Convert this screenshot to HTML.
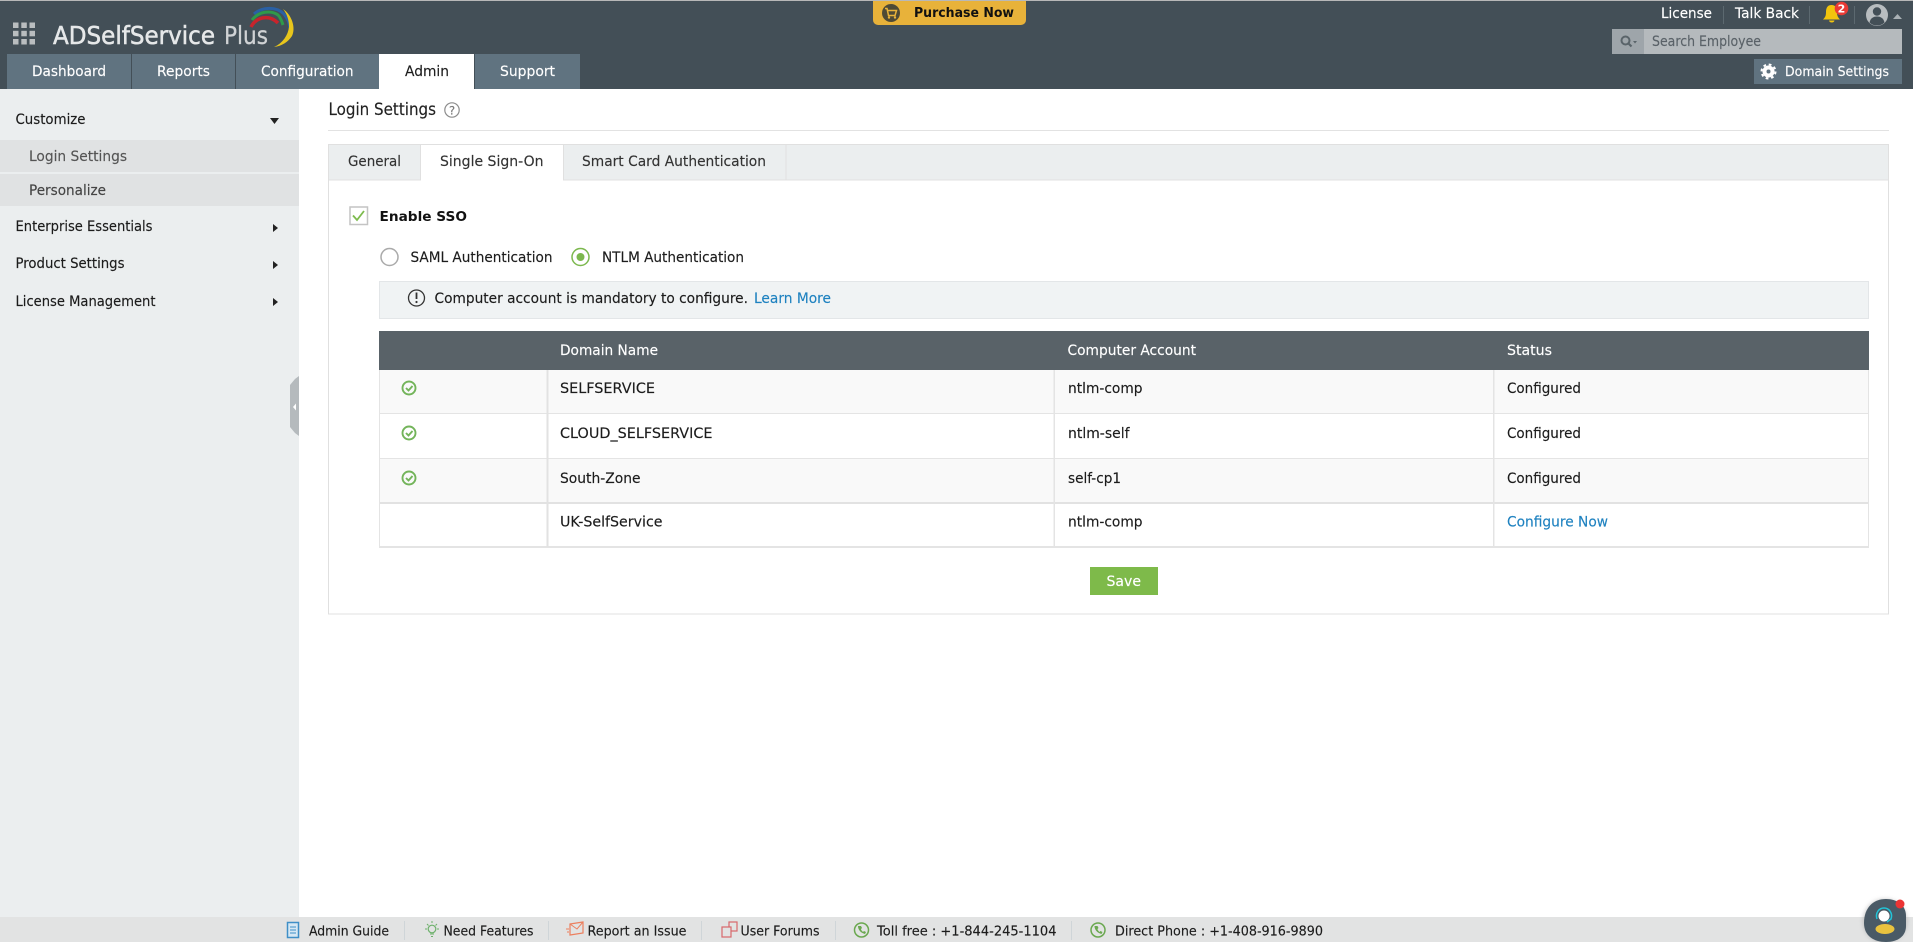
<!DOCTYPE html>
<html lang="en"><head><meta charset="utf-8"><title>ADSelfService Plus - Login Settings</title>
<style>
html,body{margin:0;padding:0;width:1913px;height:942px;overflow:hidden;background:#fff}
svg{display:block}
text{font-family:"DejaVu Sans","Liberation Sans",sans-serif;font-size:14px;color:#1c1c1c;fill:currentColor;stroke:currentColor;stroke-width:.14px}
.w{color:#fff}.g{color:#555}.l{color:#1f82c0}.t{font-size:14.5px;color:#333}.b{font-weight:bold;stroke-width:0}.f{font-size:13.5px}
</style></head><body>
<svg width="1913" height="942" viewBox="0 0 1913 942" xmlns="http://www.w3.org/2000/svg">
<defs><filter id="s" x="-30%" y="-30%" width="160%" height="160%"><feGaussianBlur stdDeviation="2"/></filter></defs>
<rect width="1913" height="942" fill="#fff"/>
<!-- header -->
<rect width="1913" height="89" fill="#434f57"/>
<rect width="1913" height="1" fill="#b8b8b8"/>
<g fill="#b9bdbf">
<rect x="13" y="22.500" width="5.500" height="5.500"/><rect x="21.300" y="22.500" width="5.500" height="5.500"/><rect x="29.500" y="22.500" width="5.500" height="5.500"/>
<rect x="13" y="30.800" width="5.500" height="5.500"/><rect x="21.300" y="30.800" width="5.500" height="5.500"/><rect x="29.500" y="30.800" width="5.500" height="5.500"/>
<rect x="13" y="39" width="5.500" height="5.500"/><rect x="21.300" y="39" width="5.500" height="5.500"/><rect x="29.500" y="39" width="5.500" height="5.500"/>
</g>
<text x="53" y="44" style="font-size:25px;color:#e6e8e9;stroke-width:.55px" textLength="162" lengthAdjust="spacingAndGlyphs">ADSelfService</text>
<text x="224" y="44" style="font-size:25px;color:#d0d3d5;stroke-width:.3px" textLength="44" lengthAdjust="spacingAndGlyphs">Plus</text>
<path d="M254 14C262 7 276 6 284 14C288 19 290 25 290 30" fill="none" stroke="#2a60a4" stroke-width="3"/>
<path d="M252 20C259 11 271 10 278 15C281 18 282 22 283 25" fill="none" stroke="#2f9a4a" stroke-width="3"/>
<path d="M251 27C256 17 269 14 278 23" fill="none" stroke="#c8242c" stroke-width="3.500"/>
<path d="M283 9C292 15 296 28 292 36C288 42 282 46 274 47C283 43 288 35 289 27C289 20 287 14 283 9Z" fill="#e8c61c"/>
<!-- purchase -->
<path d="M873 0H1026V20a5 5 0 0 1-5 5H878a5 5 0 0 1-5-5Z" fill="#e8b23a"/>
<rect x="873" y="0" width="153" height="1" fill="#b8b8b8"/>
<circle cx="891" cy="13" r="9" fill="#4f4a35"/>
<path d="M885 8.500h2l1.500 7h6.500l1.500-5h-8.500" fill="none" stroke="#e8b23a" stroke-width="1.500"/><circle cx="889" cy="17.500" r="1.200" fill="#e8b23a"/><circle cx="895" cy="17.500" r="1.200" fill="#e8b23a"/>
<text x="914" y="17" class="b" style="font-size:13px;color:#111" textLength="100" lengthAdjust="spacingAndGlyphs">Purchase Now</text>
<!-- top right -->
<text x="1661" y="18" class="w" textLength="51" lengthAdjust="spacingAndGlyphs">License</text>
<rect x="1723" y="6" width="1" height="18" fill="#5c6970"/>
<text x="1735" y="18" class="w" textLength="64" lengthAdjust="spacingAndGlyphs">Talk Back</text>
<rect x="1809" y="6" width="1" height="18" fill="#5c6970"/>
<path d="M1831.500 5c-4 0-5.500 3-5.500 7 0 4-1 5.500-3 7.500h17c-2-2-3-3.500-3-7.500 0-4-1.500-7-5.500-7Z" fill="#f2c40d"/><path d="M1829 20.500a2.800 2.500 0 0 0 5.500 0Z" fill="#f2c40d"/>
<circle cx="1841.500" cy="8.500" r="6.800" fill="#ea3a35"/><text x="1841.500" y="12.500" text-anchor="middle" class="b w" style="font-size:11px">2</text>
<rect x="1854" y="6" width="1" height="18" fill="#5c6970"/>
<circle cx="1877" cy="15" r="11" fill="#b8bdc0"/><circle cx="1877" cy="11.500" r="4.200" fill="#434f57"/><path d="M1869.500 22.500c1-4.500 4-6 7.500-6s6.500 1.500 7.500 6a11 11 0 0 1-15 0Z" fill="#434f57"/>
<path d="M1893 19l4.500-5 4.500 5Z" fill="#a9b0b4"/>
<rect x="1612" y="29" width="290" height="25" fill="#b5babd"/><rect x="1612" y="29" width="32" height="25" fill="#9ea5aa"/>
<circle cx="1625.500" cy="40.500" r="4" fill="none" stroke="#5a646a" stroke-width="2"/><path d="M1628.500 43.500l3 3" stroke="#5a646a" stroke-width="2.200"/><path d="M1633 41h4l-2 2.500Z" fill="#5a646a"/>
<text x="1652" y="46" style="color:#5a6268" textLength="109" lengthAdjust="spacingAndGlyphs">Search Employee</text>
<rect x="1754" y="59" width="148" height="25" fill="#607380"/>
<circle cx="1768.500" cy="71.500" r="4" fill="none" stroke="#fff" stroke-width="4"/>
<circle cx="1768.500" cy="71.500" r="7" fill="none" stroke="#fff" stroke-width="2" stroke-dasharray="2.750 2.750"/>
<text x="1785" y="76" class="w f" textLength="104" lengthAdjust="spacingAndGlyphs">Domain Settings</text>
<!-- nav -->
<rect x="7" y="54" width="124" height="35" fill="#607380"/><rect x="132" y="54" width="103" height="35" fill="#607380"/><rect x="236" y="54" width="143" height="35" fill="#607380"/><rect x="379" y="54" width="95" height="35" fill="#fff"/><rect x="475" y="54" width="105" height="35" fill="#607380"/>
<text x="32" y="76" class="w" textLength="74" lengthAdjust="spacingAndGlyphs">Dashboard</text>
<text x="157" y="76" class="w" textLength="53" lengthAdjust="spacingAndGlyphs">Reports</text>
<text x="261" y="76" class="w" textLength="92.500" lengthAdjust="spacingAndGlyphs">Configuration</text>
<text x="405" y="76" textLength="44" lengthAdjust="spacingAndGlyphs">Admin</text>
<text x="500" y="76" class="w" textLength="55" lengthAdjust="spacingAndGlyphs">Support</text>
<!-- sidebar -->
<rect x="0" y="89" width="299" height="828" fill="#ebeeef"/>
<rect x="0" y="140" width="299" height="32" fill="#e0e2e3"/><rect x="0" y="174" width="299" height="32" fill="#e0e2e3"/>
<text x="15.500" y="124" textLength="70" lengthAdjust="spacingAndGlyphs">Customize</text>
<path d="M270 118h9l-4.500 6Z" fill="#222"/>
<text x="29" y="161" class="g" textLength="98" lengthAdjust="spacingAndGlyphs">Login Settings</text>
<text x="29" y="195" style="color:#444" textLength="77" lengthAdjust="spacingAndGlyphs">Personalize</text>
<text x="15.500" y="231" textLength="137" lengthAdjust="spacingAndGlyphs">Enterprise Essentials</text>
<text x="15.500" y="268" textLength="109" lengthAdjust="spacingAndGlyphs">Product Settings</text>
<text x="15.500" y="306" textLength="140" lengthAdjust="spacingAndGlyphs">License Management</text>
<path d="M273 224v8l5-4Z M273 261v8l5-4Z M273 298v8l5-4Z" fill="#222"/>
<path d="M299 376v60l-4-3-5-6v-42l5-6Z" fill="#b5babd"/><path d="M296 403.500v7l-3-3.500Z" fill="#fff"/>
<!-- content -->
<text x="328.500" y="115" style="font-size:16.500px;color:#222" textLength="107.500" lengthAdjust="spacingAndGlyphs">Login Settings</text>
<circle cx="452" cy="110" r="7.200" fill="none" stroke="#8c8c8c" stroke-width="1.200"/><text x="452" y="114.500" text-anchor="middle" style="font-size:11.500px;color:#777">?</text>
<rect x="328" y="130" width="1561" height="1" fill="#e2e2e2"/>
<rect x="328.500" y="144.500" width="1560" height="469.500" fill="#fff" stroke="#e0e0e0"/>
<rect x="329" y="145" width="1559" height="35" fill="#ebeeef"/>
<rect x="328" y="179.500" width="1561" height="1" fill="#e0e0e0"/>
<rect x="421" y="145" width="142" height="36" fill="#fff"/>
<path d="M420.500 145V180M563.500 145V180M786 145V180" stroke="#e0e0e0" fill="none"/>
<text x="348" y="166" class="t" textLength="53" lengthAdjust="spacingAndGlyphs">General</text>
<text x="440" y="166" class="t" textLength="103.500" lengthAdjust="spacingAndGlyphs">Single Sign-On</text>
<text x="582" y="166" class="t" textLength="184" lengthAdjust="spacingAndGlyphs">Smart Card Authentication</text>
<rect x="350" y="207" width="17.500" height="17.500" fill="#fff" stroke="#c4c4c4" stroke-width="1.500"/>
<path d="M353 215.500l4 4.500 7-9" fill="none" stroke="#7dbb4d" stroke-width="1.800"/>
<text x="379.500" y="221" class="b" style="font-size:13.500px;color:#111" textLength="87.500" lengthAdjust="spacingAndGlyphs">Enable SSO</text>
<circle cx="389.500" cy="257" r="8.500" fill="#fff" stroke="#aaa" stroke-width="1.500"/>
<text x="410.500" y="262" textLength="142" lengthAdjust="spacingAndGlyphs">SAML Authentication</text>
<circle cx="580.500" cy="257" r="8.500" fill="#fff" stroke="#7cb84e" stroke-width="1.500"/><circle cx="580.500" cy="257" r="4" fill="#7cb84e"/>
<text x="602" y="262" textLength="142" lengthAdjust="spacingAndGlyphs">NTLM Authentication</text>
<rect x="379.500" y="281.500" width="1489" height="37" fill="#f0f3f4" stroke="#e3e6e8"/>
<circle cx="416.500" cy="298" r="8" fill="none" stroke="#333" stroke-width="1.300"/><path d="M416.500 292.500v6.500" stroke="#333" stroke-width="1.800"/><circle cx="416.500" cy="302" r="1.100" fill="#333"/>
<text x="434.500" y="303" textLength="313.500" lengthAdjust="spacingAndGlyphs">Computer account is mandatory to configure.</text>
<text x="754" y="303" class="l" textLength="77" lengthAdjust="spacingAndGlyphs">Learn More</text>
<!-- table -->
<rect x="379" y="331" width="1490" height="39" fill="#596268"/>
<text x="560" y="355" class="w" textLength="98" lengthAdjust="spacingAndGlyphs">Domain Name</text>
<text x="1067.500" y="355" class="w" textLength="128.500" lengthAdjust="spacingAndGlyphs">Computer Account</text>
<text x="1507" y="355" class="w" textLength="45" lengthAdjust="spacingAndGlyphs">Status</text>
<rect x="379" y="370" width="1490" height="43" fill="#f9f9f9"/>
<rect x="379" y="458" width="1490" height="44" fill="#f9f9f9"/>
<rect x="379" y="413" width="1490" height="1" fill="#e4e4e4"/>
<rect x="379" y="458" width="1490" height="1" fill="#e4e4e4"/>
<rect x="379" y="502" width="1490" height="2" fill="#e2e2e2"/>
<rect x="379" y="546" width="1490" height="2" fill="#e4e4e4"/>
<path d="M379.500 370V547M1868.500 370V547" stroke="#e4e4e4" fill="none"/>
<rect x="546.500" y="370" width="2" height="177" fill="#e2e2e2"/>
<rect x="1053.500" y="370" width="1.500" height="177" fill="#e4e4e4"/>
<rect x="1493" y="370" width="1.500" height="177" fill="#e4e4e4"/>
<g fill="none" stroke="#73b45a" stroke-width="1.900">
<circle cx="409" cy="388" r="6.500"/><path d="M406 388l2.500 2.500 4-4.500"/>
<circle cx="409" cy="433" r="6.500"/><path d="M406 433l2.500 2.500 4-4.500"/>
<circle cx="409" cy="478" r="6.500"/><path d="M406 478l2.500 2.500 4-4.500"/>
</g>
<text x="560" y="393" textLength="95" lengthAdjust="spacingAndGlyphs">SELFSERVICE</text>
<text x="1068" y="393" textLength="74.500" lengthAdjust="spacingAndGlyphs">ntlm-comp</text>
<text x="1507" y="393" textLength="74" lengthAdjust="spacingAndGlyphs">Configured</text>
<text x="560" y="438" textLength="152.500" lengthAdjust="spacingAndGlyphs">CLOUD_SELFSERVICE</text>
<text x="1068" y="438" textLength="61.500" lengthAdjust="spacingAndGlyphs">ntlm-self</text>
<text x="1507" y="438" textLength="74" lengthAdjust="spacingAndGlyphs">Configured</text>
<text x="560" y="483" textLength="80.500" lengthAdjust="spacingAndGlyphs">South-Zone</text>
<text x="1068" y="483" textLength="53" lengthAdjust="spacingAndGlyphs">self-cp1</text>
<text x="1507" y="483" textLength="74" lengthAdjust="spacingAndGlyphs">Configured</text>
<text x="560" y="526.500" textLength="102.500" lengthAdjust="spacingAndGlyphs">UK-SelfService</text>
<text x="1068" y="526.500" textLength="74.500" lengthAdjust="spacingAndGlyphs">ntlm-comp</text>
<text x="1507" y="526.500" class="l" textLength="101" lengthAdjust="spacingAndGlyphs">Configure Now</text>
<rect x="1090" y="567" width="68" height="28" fill="#7eba4a"/>
<text x="1106.500" y="586" class="w" textLength="34.500" lengthAdjust="spacingAndGlyphs">Save</text>
<!-- footer -->
<rect x="0" y="917" width="1913" height="25" fill="#e2e3e3"/>
<path d="M404.500 921v19M548.500 921v19M701.500 921v19M835.500 921v19M1071.500 921v19" stroke="#cfd5d8"/>
<rect x="287.500" y="922.500" width="11" height="15" fill="#d6e8f4" stroke="#3f8fc7" stroke-width="1.500"/><path d="M290 927h6M290 930h6M290 933h6" stroke="#3f8fc7"/>
<circle cx="432" cy="929" r="3.800" fill="none" stroke="#6cb06a" stroke-width="1.200"/><path d="M430 934h4M431 936.500h2M432 921v2M425 929h2M437 929h2M427 924l1.500 1.500M437 924l-1.500 1.500" stroke="#6cb06a"/>
<path d="M570 924l13-2v11l-13 2Z" fill="none" stroke="#ec7f5e" stroke-width="1.200"/><path d="M570 924l7 5 6-7M566 929h3M567 932h2" fill="none" stroke="#ec7f5e"/>
<rect x="729" y="922" width="8" height="9" fill="none" stroke="#d8686c" stroke-width="1.200"/><rect x="722" y="927" width="9" height="10" fill="#e2e3e3" stroke="#d8686c" stroke-width="1.200"/>
<circle cx="861.500" cy="930" r="7" fill="none" stroke="#6aa84f" stroke-width="1.500"/><path d="M858 926c0 4 3 7 7 8l1-2-2-1-1 1c-1-1-2-2-2-3l1-1-1-2Z" fill="#6aa84f"/>
<circle cx="1098" cy="930" r="7" fill="none" stroke="#6aa84f" stroke-width="1.500"/><path d="M1094.500 926c0 4 3 7 7 8l1-2-2-1-1 1c-1-1-2-2-2-3l1-1-1-2Z" fill="#6aa84f"/>
<text x="309" y="935.500" class="f" textLength="80" lengthAdjust="spacingAndGlyphs">Admin Guide</text>
<text x="443.500" y="935.500" class="f" textLength="90" lengthAdjust="spacingAndGlyphs">Need Features</text>
<text x="587.500" y="935.500" class="f" textLength="99" lengthAdjust="spacingAndGlyphs">Report an Issue</text>
<text x="740.500" y="935.500" class="f" textLength="79" lengthAdjust="spacingAndGlyphs">User Forums</text>
<text x="877" y="935.500" class="f" textLength="179.500" lengthAdjust="spacingAndGlyphs">Toll free : +1-844-245-1104</text>
<text x="1115" y="935.500" class="f" textLength="208" lengthAdjust="spacingAndGlyphs">Direct Phone : +1-408-916-9890</text>
<!-- chat -->
<circle cx="1885" cy="921" r="22" fill="#999" filter="url(#s)" opacity=".5"/>
<path d="M1886 899c11 0 20 6 20 17v10c0 10-8 16-20 16s-22-6-22-19c0-15 9-24 22-24Z" fill="#4a5a66"/>
<circle cx="1884" cy="916" r="5.500" fill="#fff"/>
<path d="M1877 919c-2-6 2-11 7-11s9 5 7 11l-4 3" fill="none" stroke="#22c4d8" stroke-width="1.500"/>
<ellipse cx="1885" cy="929" rx="9.500" ry="5" fill="#e9c33f"/>
<circle cx="1900" cy="904" r="4.500" fill="#ec3434"/>
</svg>
</body></html>
